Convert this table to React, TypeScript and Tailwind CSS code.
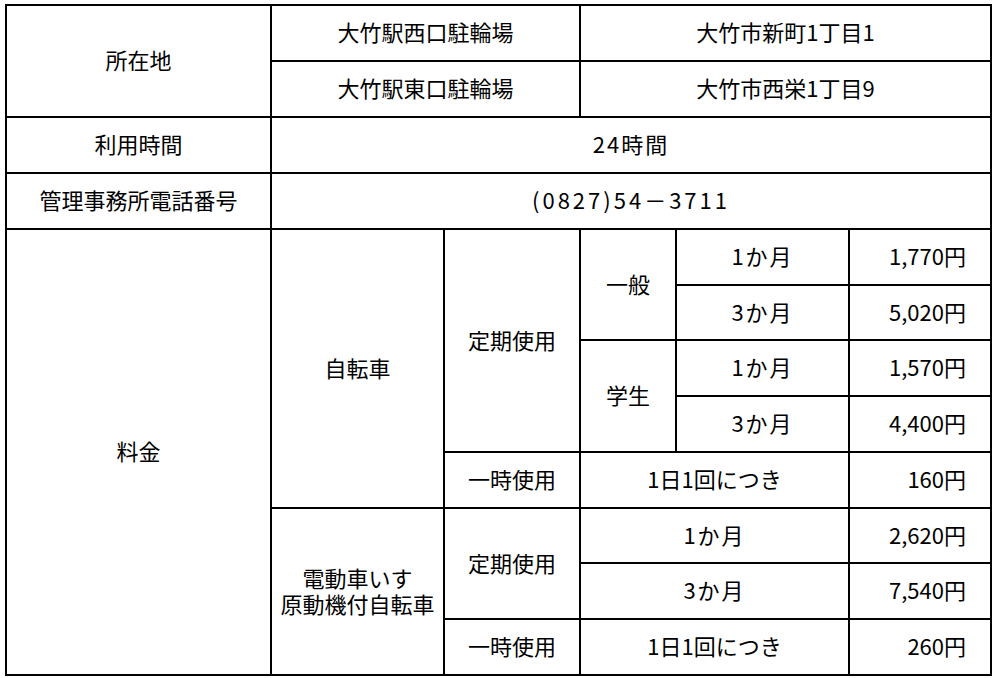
const cell = 'border-2 border-black text-center align-middle p-0 pb-[3px]';
const price = 'border-2 border-black text-right align-middle pr-[24px] pb-[3px]';

const rowHeights = [56, 56, 56, 56, 56, 55, 56, 56, 56, 55, 56, 56];

export default function App() {
  return (
    <div className="min-h-screen bg-white pt-[4px] pl-[5px] text-black text-[22px] leading-[25px] font-['Noto_Sans_CJK_JP',sans-serif]">
      <table className="table-fixed border-collapse w-[985px]">
        <colgroup>
          <col className="w-[265px]" />
          <col className="w-[173px]" />
          <col className="w-[136px]" />
          <col className="w-[96px]" />
          <col className="w-[173px]" />
          <col className="w-[142px]" />
        </colgroup>
        <tbody>
          <tr style={{ height: rowHeights[0] }}>
            <td className={cell} rowSpan={2}>所在地</td>
            <td className={cell} colSpan={2}>大竹駅西口駐輪場</td>
            <td className={cell} colSpan={3}>大竹市新町1丁目1</td>
          </tr>
          <tr style={{ height: rowHeights[1] }}>
            <td className={cell} colSpan={2}>大竹駅東口駐輪場</td>
            <td className={cell} colSpan={3}>大竹市西栄1丁目9</td>
          </tr>
          <tr style={{ height: rowHeights[2] }}>
            <td className={cell}>利用時間</td>
            <td className={`${cell} tracking-[2px]`} colSpan={5}>24時間</td>
          </tr>
          <tr style={{ height: rowHeights[3] }}>
            <td className={cell}>管理事務所電話番号</td>
            <td className={`${cell} tracking-[3px]`} colSpan={5}>(0827)54－3711</td>
          </tr>

          {/* 料金 */}
          <tr style={{ height: rowHeights[4] }}>
            <td className={cell} rowSpan={8}>料金</td>
            <td className={cell} rowSpan={5}>自転車</td>
            <td className={cell} rowSpan={4}>定期使用</td>
            <td className={cell} rowSpan={2}>一般</td>
            <td className={`${cell} tracking-[2px]`}>1か月</td>
            <td className={price}>1,770円</td>
          </tr>
          <tr style={{ height: rowHeights[5] }}>
            <td className={`${cell} tracking-[2px]`}>3か月</td>
            <td className={price}>5,020円</td>
          </tr>
          <tr style={{ height: rowHeights[6] }}>
            <td className={cell} rowSpan={2}>学生</td>
            <td className={`${cell} tracking-[2px]`}>1か月</td>
            <td className={price}>1,570円</td>
          </tr>
          <tr style={{ height: rowHeights[7] }}>
            <td className={`${cell} tracking-[2px]`}>3か月</td>
            <td className={price}>4,400円</td>
          </tr>
          <tr style={{ height: rowHeights[8] }}>
            <td className={cell}>一時使用</td>
            <td className={cell} colSpan={2}>1日1回につき</td>
            <td className={price}>160円</td>
          </tr>
          <tr style={{ height: rowHeights[9] }}>
            <td className={cell} rowSpan={3}>
              <div className="leading-[26px]">電動車いす</div>
              <div className="leading-[26px]">原動機付自転車</div>
            </td>
            <td className={cell} rowSpan={2}>定期使用</td>
            <td className={`${cell} tracking-[2px]`} colSpan={2}>1か月</td>
            <td className={price}>2,620円</td>
          </tr>
          <tr style={{ height: rowHeights[10] }}>
            <td className={`${cell} tracking-[2px]`} colSpan={2}>3か月</td>
            <td className={price}>7,540円</td>
          </tr>
          <tr style={{ height: rowHeights[11] }}>
            <td className={cell}>一時使用</td>
            <td className={cell} colSpan={2}>1日1回につき</td>
            <td className={price}>260円</td>
          </tr>
        </tbody>
      </table>
    </div>
  );
}
